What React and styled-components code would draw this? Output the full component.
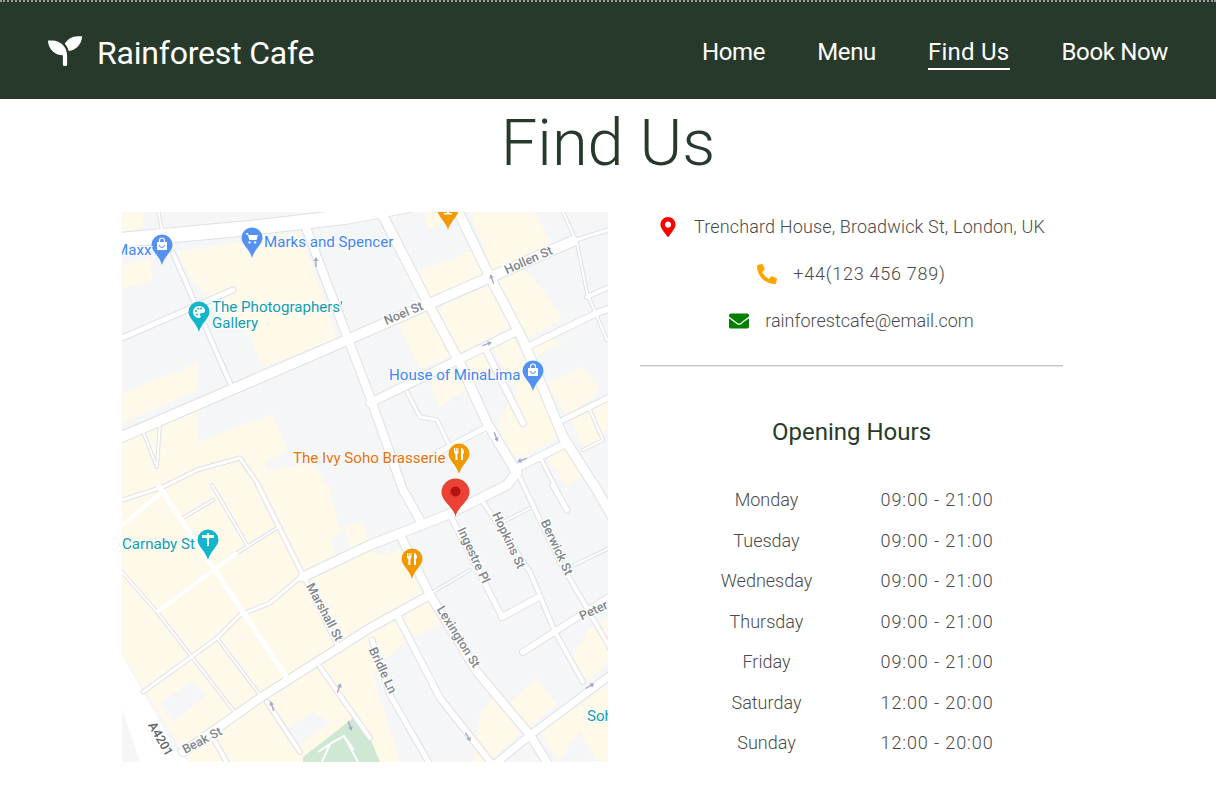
import React from 'react'
import styled, { createGlobalStyle } from 'styled-components'
import { FaSeedling, FaMapMarkerAlt, FaPhoneAlt, FaEnvelope } from 'react-icons/fa'

const GlobalStyle = createGlobalStyle`
  html, body { margin: 0; padding: 0; background: #fff; }
  body { font-family: Roboto, "Liberation Sans", sans-serif; overflow: hidden; }
`

const Header = styled.header`
  height: 97px;
  background: #27392b;
  border-top: 2px dotted #9a9a9a;
  display: flex;
  align-items: center;
  justify-content: space-between;
  padding: 0 48px;
`

const Brand = styled.div`
  display: flex;
  align-items: center;
  gap: 15px;
  padding-top: 4px;
  color: #fff;
  font-size: 32px;
  letter-spacing: -0.2px;
  svg { margin-top: -4px; }
`

const Nav = styled.nav`
  display: flex;
  gap: 52px;
  padding-top: 5px;
`

const NavLink = styled.a`
  color: #fff;
  font-size: 24px;
  letter-spacing: ${({ $active }) => ($active ? '0.25px' : '-0.35px')};
  line-height: 30px;
  padding-bottom: 1px;
  border-bottom: 2px solid ${({ $active }) => ($active ? '#fff' : 'transparent')};
`

const Title = styled.h1`
  margin: 0;
  height: 113px;
  text-align: center;
  font-size: 65px;
  line-height: 88px;
  font-weight: 300;
  color: #27392b;
`

const Content = styled.main`
  display: flex;
  gap: 32px;
  padding-left: 122px;
`

const MapBox = styled.div`
  width: 486px;
  height: 550px;
  flex: none;
  overflow: hidden;
  svg { display: block; }
`

const Info = styled.section`
  width: 423px;
`

const Contact = styled.div`
  display: flex;
  flex-direction: column;
  gap: 20px;
  padding: 1px 0 31px;
  border-bottom: 1px solid #c9c9c9;
  box-shadow: 0 1px 0 #e6e6e6;
`

const ContactRow = styled.div`
  height: 27px;
  display: flex;
  align-items: center;
  justify-content: center;
  gap: 16px;
  font-size: 18px;
  font-weight: 300;
  letter-spacing: ${({ $spacing }) => $spacing || 0}px;
  color: #4a4a4a;
  svg { color: ${({ $color }) => $color}; font-size: 20px; flex: none; }
`

const HoursTitle = styled.h2`
  margin: 49px 0 37px;
  text-align: center;
  font-size: 24px;
  line-height: 34px;
  font-weight: 400;
  color: #27392b;
`

const Hours = styled.div`
  display: grid;
  grid-template-columns: 114px 113px;
  column-gap: 57px;
  row-gap: 13.5px;
  justify-content: center;
  font-size: 18px;
  line-height: 27px;
  font-weight: 300;
  color: #4a4a4a;
`

const Day = styled.div`
  text-align: center;
  white-space: nowrap;
`

const Time = styled.div`
  text-align: center;
  white-space: nowrap;
  letter-spacing: 0.9px;
`

const hours = [
  ['Monday', '09:00 - 21:00'],
  ['Tuesday', '09:00 - 21:00'],
  ['Wednesday', '09:00 - 21:00'],
  ['Thursday', '09:00 - 21:00'],
  ['Friday', '09:00 - 21:00'],
  ['Saturday', '12:00 - 20:00'],
  ['Sunday', '12:00 - 20:00'],
]

// map data is in page coordinates, the viewBox shifts it into the box
const buildings = [
  '122,212 143,212 143,228 122,232',
  '122,265 150,258 152,282 122,288',
  '177,252 300,232 337,338 262,368 250,335 208,300 186,270',
  '122,393 198,363 197,390 122,423',
  '122,440 197,410 198,442 237,427 272,415 288,450 265,463 268,470 313,463 330,490 340,530 362,520 372,552 383,555 400,550 422,592 445,622 407,640 372,672 400,762 190,762 122,655',
  '423,212 463,212 430,230',
  '470,212 534,212 555,250 493,272',
  '497,278 525,270 545,292 562,320 527,338',
  '403,277 473,250 485,273 430,300',
  '437,308 490,285 510,327 458,353',
  '398,323 428,310 450,357 420,370',
  '463,357 483,350 493,370 440,407 430,383',
  '493,350 513,338 537,383 517,392',
  '530,347 553,337 563,343 533,358',
  '547,383 583,367 600,390 567,417',
  '513,393 540,383 563,437 513,460 497,427',
  '570,417 590,410 603,440 583,450',
  '593,410 608,400 608,430 600,436',
  '547,457 567,445 587,473 567,487',
  '510,702 537,678 557,705 527,728',
  '473,762 480,715 493,698 520,733 490,762',
  '570,662 590,628 608,618 608,662 587,682',
  '540,732 608,685 608,762 597,762 580,732 558,762',
]

const patches = [
  '160,702 192,682 207,695 173,722',
  '287,728 313,712 330,723 297,745',
  '330,540 345,530 352,550 338,558',
  '122,708 140,762 122,762',
]

const roads = [
  // top and long cross streets
  { w: 14, p: '110,241 250,228 345,217 410,205' },
  { w: 10, p: '110,442 340,343 573,241' },
  { w: 3, p: '573,241 620,226' },
  { w: 5, p: '122,338 233,290' },
  { w: 8, p: '370,403 513,333' },
  { w: 6, p: '527,347 597,313 620,305' },
  { w: 4, p: '587,297 620,282' },
  { w: 5, p: '563,420 620,392' },
  { w: 7, p: '513,470 567,443' },
  { w: 5, p: '487,427 437,453' },
  { w: 9, p: '303,577 370,545 447,515 507,485 517,472' },
  { w: 8, p: '183,752 260,698 370,628 430,595' },
  { w: 2, p: '433,592 470,570' },
  { w: 2, p: '503,522 530,508' },
  { w: 2, p: '570,567 620,543' },
  { w: 6, p: '502,617 537,598' },
  { w: 6, p: '523,652 620,590' },
  { w: 7, p: '490,768 533,733 620,668' },
  // running down the map
  { w: 2, p: '157,205 162,230' },
  { w: 4, p: '173,253 230,383' },
  { w: 8, p: '305,225 370,397 403,490 420,520' },
  { w: 9, p: '380,210 430,307 460,363 487,423 517,473' },
  { w: 9, p: '455,205 490,277 523,340 563,437 597,490 620,530' },
  { w: 2, p: '563,212 577,243 587,293 607,340' },
  { w: 6, p: '485,348 523,423' },
  { w: 3, p: '407,392 420,417 437,420 448,443' },
  { w: 8, p: '400,535 430,595 477,672 530,735 555,775' },
  { w: 6, p: '398,617 440,698 495,768' },
  { w: 5, p: '372,640 390,695 433,770' },
  { w: 5, p: '450,515 502,617' },
  { w: 4, p: '483,502 530,572 555,632 583,682' },
  { w: 4, p: '520,478 560,562 620,665' },
  { w: 5, p: '553,485 567,510' },
  { w: 3, p: '540,457 557,490' },
  { w: 2, p: '590,410 603,440 583,450' },
  // lanes west of Marshall St
  { w: 2, p: '143,432 157,467 160,423' },
  { w: 3, p: '122,500 163,487 197,470 240,458 260,487' },
  { w: 4, p: '258,485 303,575 340,650' },
  { w: 2, p: '212,485 247,545' },
  { w: 2, p: '183,518 213,500' },
  { w: 2, p: '237,553 277,528' },
  { w: 2, p: '122,572 157,612 237,715' },
  { w: 3, p: '143,692 190,658 217,638 240,615 270,603 303,575' },
  { w: 2, p: '217,638 260,695' },
  { w: 4, p: '320,667 370,738' },
  { w: 4, p: '267,702 300,752' },
  { w: 4, p: '213,738 230,768' },
]

const openRoads = [
  { w: 5, p: '158,485 287,678' },
  { w: 4, p: '122,525 165,490' },
  { w: 4, p: '157,612 237,553' },
]

const pinPath = (x, y, r, tip) =>
  `M${x} ${y + tip}C${x - 2} ${y + r + 1} ${x - r} ${y + r * 0.6} ${x - r} ${y}A${r} ${r} 0 1 1 ${x + r} ${y}C${x + r} ${y + r * 0.6} ${x + 2} ${y + r + 1} ${x} ${y + tip}Z`

const Pin = ({ x, y, color, children }) => (
  <g>
    <path d={pinPath(x, y, 10.5, 20)} fill={color} />
    <g transform={`translate(${x} ${y})`} fill="#fff">{children}</g>
  </g>
)

const Bag = () => (
  <>
    <path d="M-5-3h10v8h-10z" />
    <path d="M-2.5-3v-1.5a2.5 2.5 0 0 1 5 0V-3" fill="none" stroke="#fff" strokeWidth="1.2" />
    <path d="M-2.5 0a2.5 2.5 0 0 0 5 0" fill="none" stroke="#5491f5" strokeWidth="1" />
  </>
)

const Fork = () => (
  <>
    <path d="M-5-6h1v3h.7v-3h1v3h.7v-3h1v5l-1 1v6h-2v-6l-1.4-1z" />
    <path d="M2-6c2 0 3 2 3 5l-1 1v6h-2z" />
  </>
)

const MapLabel = styled.text`
  font-family: Roboto, sans-serif;
  font-size: 15.1px;
  font-weight: 400;
  fill: ${({ $color }) => $color};
  paint-order: stroke;
  stroke: rgba(255, 255, 255, 0.8);
  stroke-width: 2px;
`

const StreetLabel = styled.text`
  font-family: Roboto, sans-serif;
  font-size: 12.5px;
  font-weight: 500;
  fill: ${({ $dark }) => ($dark ? '#5f6368' : '#80868b')};
  text-anchor: middle;
  paint-order: stroke;
  stroke: #fff;
  stroke-width: 2.5px;
`

const streets = [
  ['Noel St', 405, 317, -23],
  ['Hollen St', 530, 264, -24],
  ['Ingestre Pl', 470, 557, 65],
  ['Hopkins St', 505, 542, 65],
  ['Berwick St', 553, 549, 65],
  ['Peter St', 602, 611, -25],
  ['Marshall St', 321, 614, 62],
  ['Bridle Ln', 379, 672, 65],
  ['Lexington St', 455, 639, 58],
  ['Beak St', 204, 744, -28],
]

const arrows = [
  [316, 262, 0], [492, 279, -20], [487, 344, 70], [496, 437, 160], [522, 460, 250],
  [339, 688, 20], [350, 726, 160], [590, 686, 60], [468, 737, 150], [272, 706, -20],
]

const MapDrawing = () => (
  <svg width="486" height="550" viewBox="122 212 486 550">
    <rect x="122" y="212" width="486" height="550" fill="#f5f6f8" />
    {buildings.map((b) => <polygon key={b} points={b} fill="#fef9e9" />)}
    {patches.map((b) => <polygon key={b} points={b} fill="#f5f6f8" />)}
    <polygon points="303,757 353,718 370,738 380,762 303,762" fill="#cfe8d3" />
    <path d="M322 762l8-18 14-8 10 14M330 744l-12 8M344 736l14 26" fill="none" stroke="#fff" strokeWidth="2" />
    <polygon points="122,655 177,752 190,762 140,762 122,708" fill="#fff" />
    {roads.map((r) => (
      <polyline key={r.p + 'e'} points={r.p} fill="none" stroke="#dfe1e6" strokeWidth={r.w + 2} strokeLinejoin="round" strokeLinecap="round" />
    ))}
    {roads.map((r) => (
      <polyline key={r.p} points={r.p} fill="none" stroke="#fff" strokeWidth={r.w} strokeLinejoin="round" strokeLinecap="round" />
    ))}
    {openRoads.map((r) => (
      <polyline key={r.p} points={r.p} fill="none" stroke="#fff" strokeWidth={r.w} />
    ))}
    {arrows.map(([x, y, a]) => (
      <path key={x + '-' + y} transform={`translate(${x} ${y}) rotate(${a})`} d="M0-5L2.5-1H.7V5H-.7V-1H-2.5Z" fill="#a3a8c9" />
    ))}
    {streets.map(([t, x, y, a]) => (
      <StreetLabel key={t} transform={`rotate(${a} ${x} ${y})`} x={x} y={y}>{t}</StreetLabel>
    ))}
    <StreetLabel $dark transform="rotate(60 157 741)" x="157" y="741">A4201</StreetLabel>

    <Pin x={162} y={245} color="#5491f5"><Bag /></Pin>
    <Pin x={252} y={238} color="#5491f5">
      <path d="M-6-5h2l.6 2H6l-1.5 5h-7L-4.5-3.6H-6zM-2.5 3.2a1.2 1.2 0 1 0 .1 0zM3 3.2a1.2 1.2 0 1 0 .1 0z" />
    </Pin>
    <Pin x={199} y={312} color="#12b5cb">
      <path d="M0-6a6 6 0 1 0 0 12c2 0 2-2 1-3s1-2 2-2 3 0 3-2.500C6-4 3-6 0-6z" />
      <g fill="#12b5cb">
        <circle cx="-3" cy="-1" r="1" /><circle cx="-1" cy="-3.500" r="1" /><circle cx="2" cy="-3.500" r="1" /><circle cx="-2" cy="2.500" r="1" />
      </g>
    </Pin>
    <Pin x={533} y={371} color="#5491f5"><Bag /></Pin>
    <Pin x={448} y={210} color="#f29900"><path d="M-1-2h2v6h-2zM-4 3h8v1.500h-8z" /></Pin>
    <Pin x={459} y={454} color="#f29900"><Fork /></Pin>
    <Pin x={412} y={559} color="#f29900"><Fork /></Pin>
    <Pin x={208} y={540} color="#12b5cb">
      <path d="M-1-7h2v2h5v3H1v8h-2v-8h-5v-3h5z" />
    </Pin>

    <path d={pinPath(455.5, 492.5, 14, 24)} fill="#ea4335" />
    <circle cx="455.5" cy="491.5" r="5" fill="#b31412" />

    <MapLabel $color="#3f86f4" x="115" y="255">Maxx</MapLabel>
    <MapLabel $color="#3f86f4" x="264" y="247">Marks and Spencer</MapLabel>
    <MapLabel $color="#129eaf" x="212" y="312">The Photographers&apos;</MapLabel>
    <MapLabel $color="#129eaf" x="212" y="328">Gallery</MapLabel>
    <MapLabel $color="#3f86f4" x="389" y="380">House of MinaLima</MapLabel>
    <MapLabel $color="#e8710a" x="293" y="463">The Ivy Soho Brasserie</MapLabel>
    <MapLabel $color="#129eaf" x="122" y="549">Carnaby St</MapLabel>
    <MapLabel $color="#129eaf" x="587" y="721">Soho</MapLabel>
  </svg>
)

export default function App() {
  return (
    <>
      <GlobalStyle />
      <Header>
        <Brand><FaSeedling size={34} />Rainforest Cafe</Brand>
        <Nav>
          <NavLink>Home</NavLink>
          <NavLink>Menu</NavLink>
          <NavLink $active>Find Us</NavLink>
          <NavLink>Book Now</NavLink>
        </Nav>
      </Header>
      <Title>Find Us</Title>
      <Content>
        <MapBox><MapDrawing /></MapBox>
        <Info>
          <Contact>
            <ContactRow $color="#ff0000" $spacing={0.15}><FaMapMarkerAlt />Trenchard House, Broadwick St, London, UK</ContactRow>
            <ContactRow $color="#ffa500" $spacing={0.75}><FaPhoneAlt />+44(123 456 789)</ContactRow>
            <ContactRow $color="#008000"><FaEnvelope />rainforestcafe@email.com</ContactRow>
          </Contact>
          <HoursTitle>Opening Hours</HoursTitle>
          <Hours>
            {hours.map(([day, time]) => (
              <React.Fragment key={day}>
                <Day>{day}</Day>
                <Time>{time}</Time>
              </React.Fragment>
            ))}
          </Hours>
        </Info>
      </Content>
    </>
  )
}
